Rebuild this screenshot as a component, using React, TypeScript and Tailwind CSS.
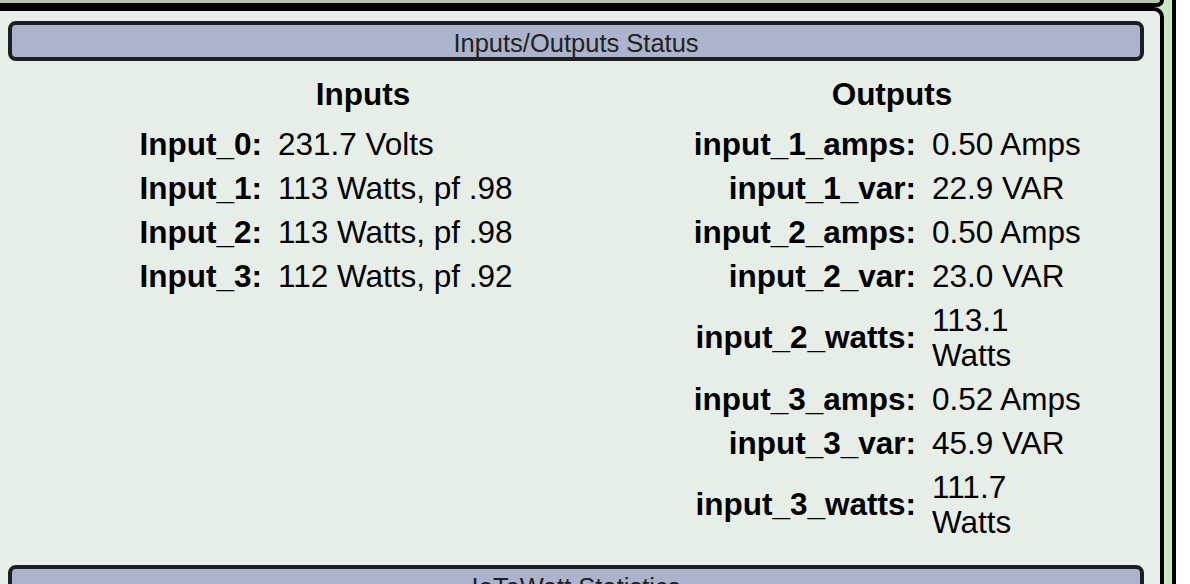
const inputs = [
  { label: "Input_0:", value: "231.7 Volts" },
  { label: "Input_1:", value: "113 Watts, pf .98" },
  { label: "Input_2:", value: "113 Watts, pf .98" },
  { label: "Input_3:", value: "112 Watts, pf .92" },
];

const outputs = [
  { label: "input_1_amps:", value: "0.50 Amps" },
  { label: "input_1_var:", value: "22.9 VAR" },
  { label: "input_2_amps:", value: "0.50 Amps" },
  { label: "input_2_var:", value: "23.0 VAR" },
  { label: "input_2_watts:", value: "113.1 Watts" },
  { label: "input_3_amps:", value: "0.52 Amps" },
  { label: "input_3_var:", value: "45.9 VAR" },
  { label: "input_3_watts:", value: "111.7 Watts" },
];

const SectionBar = ({ title }: { title: string }) => (
  <div className="flex h-[40px] items-center justify-center rounded-[8px] border-4 border-[#1c1f23] bg-[#acb3cc] pt-[5px] text-[25.5px] leading-none text-[#222]">
    {title}
  </div>
);

const App = () => {
  return (
    <div className="h-[584px] overflow-hidden bg-white font-['Liberation_Sans',Arial,sans-serif] text-black">
      <div className="flex h-full w-[1176px] flex-col border-r-4 border-black bg-[#cbe8c0] pr-2">
        <div className="h-[7px] shrink-0 rounded-br-[10px] border-r-4 border-b-4 border-black bg-[#b7c8aa]" />
        <div className="flex-1 rounded-tr-[10px] border-t-4 border-r-4 border-black bg-[#e6eee7] pl-2 pr-4">
          <div className="mt-[10px]">
            <SectionBar title="Inputs/Outputs Status" />
          </div>

          <div className="mt-[15.5px] flex pl-[129px] text-[31.5px] leading-[35px]">
            <div className="w-[452px]">
              <h2 className="text-center font-bold">Inputs</h2>
              <div className="mt-[10.5px] grid grid-cols-[125px_1fr] gap-x-4">
                {inputs.map((row) => (
                  <div key={row.label} className="contents">
                    <div className="py-[4.5px] text-right font-bold">{row.label}</div>
                    <div className="py-[4.5px]">{row.value}</div>
                  </div>
                ))}
              </div>
            </div>

            <div className="ml-[103px] w-[400px]">
              <h2 className="text-center font-bold">Outputs</h2>
              <div className="mt-[10.5px] grid grid-cols-[224px_160px] gap-x-4">
                {outputs.map((row) => (
                  <div key={row.label} className="contents">
                    <div className="flex items-center justify-end py-[4.5px] font-bold">{row.label}</div>
                    <div className="py-[4.5px]">{row.value}</div>
                  </div>
                ))}
              </div>
            </div>
          </div>

          <div className="mt-[21px]">
            <SectionBar title="IoTaWatt Statistics" />
          </div>
        </div>
      </div>
    </div>
  );
};

export default App;
